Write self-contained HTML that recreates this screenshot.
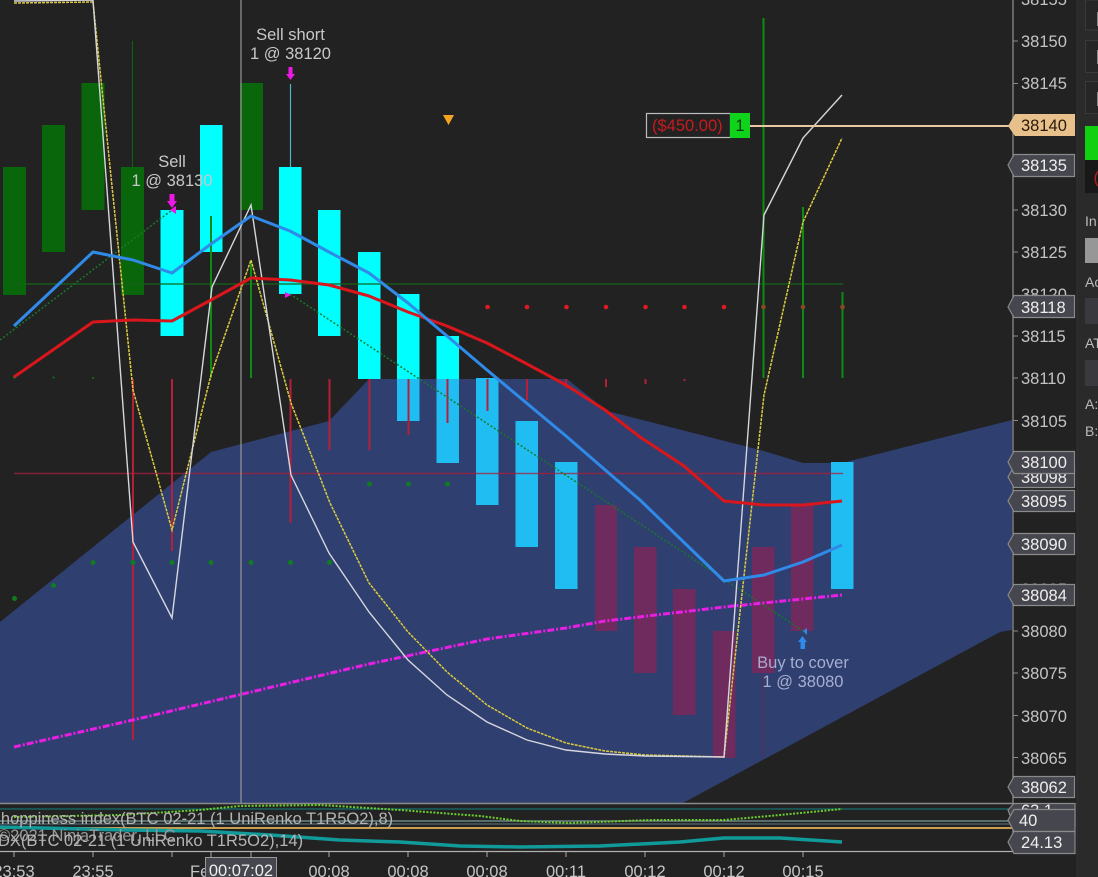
<!DOCTYPE html>
<html><head><meta charset="utf-8"><style>
html,body{margin:0;padding:0;background:#222;width:1098px;height:877px;overflow:hidden}
svg{display:block;filter:blur(.35px)}
text{font-family:"Liberation Sans",sans-serif;font-size:16.5px;fill:#c8c8c8}
.s{fill:#c4c4c4}
.l{fill:#eee;text-anchor:start}
.m{text-anchor:middle}
.g{fill:#0a660a}.c{fill:#00ffff}.b{fill:#20bdf2}.r{fill:#6f2a5e}
.box{fill:#46464e;stroke:#8a8a8a;stroke-width:1.2}
</style></head><body>
<svg width="1098" height="877" viewBox="0 0 1098 877" xmlns="http://www.w3.org/2000/svg">
<rect width="1098" height="877" fill="#222222"/>
<rect x="1077" y="0" width="21" height="877" fill="#2a2a2a"/>
<line x1="1077" y1="0" x2="1077" y2="877" stroke="#333"/>

<!-- cloud -->
<polygon fill="#2f3f6f" points="0,622 211,452 329,421 369,379 567,379 607,411 764,451 803,463 842,463 1012,420 1012,630 1000,632 683,803 0,803"/>

<!-- thin green wick -->
<line x1="132.500" y1="41" x2="132.500" y2="167" stroke="#0a660a"/>
<!-- green bars -->
<rect class="g" x="3" y="167" width="23" height="128"/>
<rect class="g" x="42" y="125" width="23" height="127"/>
<rect class="g" x="81.500" y="83" width="23" height="127"/>
<rect class="g" x="121" y="167" width="23" height="128"/>
<rect class="g" x="240" y="83" width="23" height="127"/>
<!-- cyan bars -->
<rect class="c" x="160.500" y="210" width="23" height="126"/>
<rect class="c" x="200" y="125" width="22.500" height="127"/>
<rect class="c" x="279" y="167" width="22.500" height="127"/>
<rect class="c" x="318" y="210" width="22.500" height="126"/>
<rect class="c" x="358" y="252" width="22.500" height="127"/>
<rect class="c" x="397" y="294" width="22.500" height="85"/>
<rect class="c" x="436.500" y="336" width="22.500" height="43"/>
<rect class="b" x="397" y="379" width="22.500" height="42"/>
<rect class="b" x="436.500" y="379" width="22.500" height="84"/>
<rect class="b" x="476" y="378" width="22.500" height="127"/>
<rect class="b" x="515.500" y="421" width="22.500" height="126"/>
<rect class="b" x="555" y="462" width="22.500" height="127"/>
<rect class="b" x="831" y="462" width="22.500" height="127"/>
<!-- maroon bars -->
<rect class="r" x="595" y="505" width="22" height="126"/>
<rect class="r" x="634" y="547" width="22.500" height="126"/>
<rect class="r" x="673" y="589" width="22.500" height="126"/>
<rect class="r" x="713" y="631" width="22.500" height="127"/>
<rect class="r" x="752" y="547" width="22.500" height="126"/>
<rect class="r" x="791" y="505" width="22.500" height="126"/>
<line x1="763.500" y1="673" x2="763.500" y2="757" stroke="#56305f" stroke-width="1.500"/>
<!-- sell short wick -->
<line x1="290.500" y1="84" x2="290.500" y2="167" stroke="#4fb4c4" stroke-width="1.200"/>

<!-- horizontal lines -->
<line x1="14" y1="284" x2="843" y2="284" stroke="#14641a" stroke-width="1.300"/>
<line x1="14" y1="473.500" x2="843" y2="473.500" stroke="#a82040" stroke-width="1.500" opacity=".75"/>

<!-- red wicks -->
<g stroke="#b61f3a" stroke-width="2">
<line x1="133" y1="379" x2="133" y2="740"/>
<line x1="172" y1="379" x2="172" y2="551"/>
<line x1="290.500" y1="379" x2="290.500" y2="523"/>
<line x1="329.500" y1="379" x2="329.500" y2="450"/>
<line x1="369.500" y1="379" x2="369.500" y2="450"/>
<line x1="408.500" y1="379" x2="408.500" y2="435"/>
<line x1="447.500" y1="379" x2="447.500" y2="423"/>
<line x1="487.500" y1="379" x2="487.500" y2="411"/>
<line x1="527" y1="379" x2="527" y2="400"/>
<line x1="566" y1="379" x2="566" y2="388"/>
<line x1="606" y1="379" x2="606" y2="387"/>
<line x1="645.500" y1="379" x2="645.500" y2="384"/>
<line x1="684.500" y1="379" x2="684.500" y2="381"/>
</g>
<!-- green wicks -->
<g stroke="#0f8a12" stroke-width="2">
<line x1="211" y1="216" x2="211" y2="378"/>
<line x1="251" y1="262" x2="251" y2="378"/>
<line x1="763.500" y1="18" x2="763.500" y2="378"/>
<line x1="803" y1="207" x2="803" y2="378"/>
<line x1="842.500" y1="292" x2="842.500" y2="378"/>
</g>

<!-- dots -->
<g fill="#e01a24">
<circle cx="487.500" cy="307" r="2.300"/><circle cx="527" cy="307" r="2.300"/><circle cx="566.500" cy="307" r="2.300"/><circle cx="606" cy="307" r="2.300"/><circle cx="645.500" cy="307" r="2.300"/><circle cx="684.500" cy="307" r="2.300"/><circle cx="724" cy="307" r="2.300"/>
</g>
<g fill="#8a4a20"><circle cx="763.500" cy="307" r="2.300"/><circle cx="803" cy="307" r="2.300"/><circle cx="842.500" cy="307" r="2.300"/></g>
<g fill="#0f7c22">
<circle cx="14.500" cy="598.500" r="2.500"/><circle cx="53.500" cy="585.500" r="2.500"/><circle cx="93" cy="562.500" r="2.500"/><circle cx="133" cy="562.500" r="2.500"/><circle cx="172" cy="562.500" r="2.500"/><circle cx="211" cy="562.500" r="2.500"/><circle cx="251" cy="562.500" r="2.500"/><circle cx="290.500" cy="562.500" r="2.500"/><circle cx="329.500" cy="562.500" r="2.500"/>
<circle cx="369.500" cy="484" r="2.500"/><circle cx="408.500" cy="484" r="2.500"/><circle cx="447.500" cy="484" r="2.500"/>
<circle cx="14.500" cy="377" r="1.500"/><circle cx="53.500" cy="377.500" r="1"/><circle cx="93" cy="378" r="1"/>
</g>

<!-- crosshair -->
<line x1="241" y1="0" x2="241" y2="851" stroke="#9a9a9a" stroke-width="1.300" opacity=".9"/>

<!-- dotted trade lines -->
<polyline fill="none" stroke="#157a2a" stroke-width="1.500" stroke-dasharray="2 2" points="0,340 172,210"/>
<polyline fill="none" stroke="#157a2a" stroke-width="1.500" stroke-dasharray="2 2" points="290,294 803,631"/>

<!-- magenta -->
<polyline fill="none" stroke="#e81ee4" stroke-width="3" stroke-dasharray="7 2 2 2" points="14,747 133,720 251,692 369,664 487,639 566,628 605,621 724,607 842,595"/>
<!-- yellow -->
<polyline fill="none" stroke="#dccb40" stroke-width="1.500" stroke-dasharray="3 1" points="14,3 93,2 133,390 172,530 211,375 251,260 291,403 330,503 369,583 408,632 447,672 487,705 527,728 566,743 605,751 645,755 724,757 764,395 803,222 842,138"/>
<!-- white -->
<polyline fill="none" stroke="#d6d6de" stroke-width="1.400" points="14,1 93,0 133,542 172,618 212,287 251,205 291,475 329,553 369,612 408,660 447,695 487,722 527,740 566,750 605,754 645,756 724,757 764,215 803,138 842,95"/>
<!-- red line -->
<polyline fill="none" stroke="#d9161c" stroke-width="3" stroke-linejoin="round" points="14,377 93,322 133,320 172,321 211,300 251,278 290,280 329,285 369,296 408,312 447,326 487,343 527,364 566,385 605,410 640,437 684,466 724,501 764,505 803,505 842,501"/>
<!-- blue line -->
<polyline fill="none" stroke="#2f8ae8" stroke-width="3" stroke-linejoin="round" points="14,326 93,252 133,260 172,273 211,244 251,216 290,231 329,252 369,273 408,303 447,336 487,370 566,436 640,500 724,581 764,575 803,562 842,545"/>

<!-- tan line + position -->
<line x1="750" y1="126" x2="1012" y2="126" stroke="#e8c8a0" stroke-width="2"/>
<rect x="646.500" y="113.500" width="84" height="24" fill="#222" stroke="#bdbdbd" stroke-width="1.200"/>
<rect x="730" y="113" width="20" height="25" fill="#10d41c"/>
<text x="652" y="131" style="fill:#c81a20">($450.00)</text>
<text x="740" y="131" class="m" style="fill:#0b3a0b">1</text>

<!-- orange triangle -->
<polygon points="443,115 454,115 448.500,125" fill="#f5a420"/>

<!-- arrows -->
<g fill="#ee18e6">
<polygon points="169.500,194 174.500,194 174.500,201 177,201 172,208 167,201 169.500,201"/>
<polygon points="288.500,67 292.500,67 292.500,74 295,74 290.500,80 286,74 288.500,74"/>
<polygon points="170,210 176,206 176,214"/>
<polygon points="285,292 285,298 291,295"/>
</g>
<g fill="#2f8ae8">
<polygon points="800.500,649 805,649 805,642 807,642 802.500,636 798,642 800.500,642"/>
<polygon points="803,631 807,628 807,635"/>
</g>

<!-- trade labels -->
<text x="172" y="167" class="m">Sell</text>
<text x="172" y="186" class="m">1 @ 38130</text>
<text x="290.500" y="40" class="m">Sell short</text>
<text x="290.500" y="59" class="m">1 @ 38120</text>
<text x="803" y="668" class="m" style="fill:#a6aed0">Buy to cover</text>
<text x="803" y="687" class="m" style="fill:#a6aed0">1 @ 38080</text>

<!-- lower panel -->
<rect x="0" y="803" width="1013" height="48" fill="#222"/>
<line x1="0" y1="803.500" x2="1013" y2="803.500" stroke="#8a8a8a" stroke-width="1.500"/>
<line x1="0" y1="809" x2="1013" y2="809" stroke="#17706e" stroke-width="1.200"/>
<line x1="0" y1="821" x2="1013" y2="821" stroke="#7a9a98" stroke-width="1.300"/>
<line x1="0" y1="824" x2="1013" y2="824" stroke="#4f6a70" stroke-width="1.300"/>
<line x1="0" y1="828" x2="1013" y2="828" stroke="#c8a050" stroke-width="2"/>
<polyline fill="none" stroke="#109a9a" stroke-width="3.500" points="0,827 125,830 200,831 270,835 340,840 400,842 460,846 520,847 600,846 680,842 724,838 780,838 842,842"/>
<polyline fill="none" stroke="#6ccc2c" stroke-width="2" stroke-dasharray="2 1.500" points="14,817 120,815 200,810 240,806 320,805 400,810 480,816 520,821 570,823 650,820 724,820 780,815 842,809"/>
<text x="-11" y="824" style="fill:#b4b4b4">Choppiness index(BTC 02-21 (1 UniRenko T1R5O2),8)</text>
<text x="-2" y="841" style="fill:#9a9a9a">©2021 NinjaTrader, LLC</text>
<text x="-13" y="846" style="fill:#b4b4b4">ADX(BTC 02-21 (1 UniRenko T1R5O2),14)</text>
<line x1="0" y1="851.500" x2="1013" y2="851.500" stroke="#b0b0b0" stroke-width="1.300"/>

<!-- x ticks -->
<g stroke="#aaa" stroke-width="1">
<line x1="14" y1="852" x2="14" y2="857"/><line x1="93" y1="852" x2="93" y2="857"/><line x1="172" y1="852" x2="172" y2="857"/><line x1="211" y1="852" x2="211" y2="857"/><line x1="251" y1="852" x2="251" y2="857"/><line x1="329" y1="852" x2="329" y2="857"/><line x1="408" y1="852" x2="408" y2="857"/><line x1="487" y1="852" x2="487" y2="857"/><line x1="566" y1="852" x2="566" y2="857"/><line x1="645" y1="852" x2="645" y2="857"/><line x1="724" y1="852" x2="724" y2="857"/><line x1="803" y1="852" x2="803" y2="857"/>
</g>
<g class="s">
<text x="14" y="877" class="m s">23:53</text>
<text x="93" y="877" class="m s">23:55</text>
<text x="190" y="877" class="s">Feb</text>
<text x="329" y="877" class="m s">00:08</text>
<text x="408" y="877" class="m s">00:08</text>
<text x="487" y="877" class="m s">00:08</text>
<text x="566" y="877" class="m s">00:11</text>
<text x="645" y="877" class="m s">00:12</text>
<text x="724" y="877" class="m s">00:12</text>
<text x="803" y="877" class="m s">00:15</text>
</g>
<rect x="205.500" y="857.500" width="71" height="24" fill="#46464e" stroke="#9a9a9a"/>
<text x="241" y="876" class="m" style="fill:#eee">00:07:02</text>

<!-- price axis -->
<line x1="1013" y1="0" x2="1013" y2="851" stroke="#8a8a8a" stroke-width="1.300"/>
<g stroke="#8a8a8a">
<line x1="1013" y1="41" x2="1018" y2="41"/><line x1="1013" y1="83.500" x2="1018" y2="83.500"/><line x1="1013" y1="210" x2="1018" y2="210"/><line x1="1013" y1="252" x2="1018" y2="252"/><line x1="1013" y1="336" x2="1018" y2="336"/><line x1="1013" y1="378" x2="1018" y2="378"/><line x1="1013" y1="420.500" x2="1018" y2="420.500"/><line x1="1013" y1="631" x2="1018" y2="631"/><line x1="1013" y1="673" x2="1018" y2="673"/><line x1="1013" y1="715.500" x2="1018" y2="715.500"/><line x1="1013" y1="757.500" x2="1018" y2="757.500"/>
</g>
<text x="1021" y="5" class="s">38155</text>
<text x="1021" y="47" class="s">38150</text>
<text x="1021" y="89" class="s">38145</text>
<text x="1021" y="216" class="s">38130</text>
<text x="1021" y="258" class="s">38125</text>
<text x="1021" y="300" class="s">38120</text>
<text x="1021" y="342" class="s">38115</text>
<text x="1021" y="384" class="s">38110</text>
<text x="1021" y="427" class="s">38105</text>
<text x="1021" y="595" class="s">38085</text>
<text x="1021" y="637" class="s">38080</text>
<text x="1021" y="679" class="s">38075</text>
<text x="1021" y="722" class="s">38070</text>
<text x="1021" y="764" class="s">38065</text>

<!-- price labels -->
<polygon points="1008,126 1015,114 1075,114 1075,136 1015,136 1008,126" fill="#e8c08c"/>
<text x="1021" y="131" style="fill:#2a1a08">38140</text>
<polygon class="box" points="1008,165 1014,154.500 1074.500,154.500 1074.500,176.500 1014,176.500"/>
<text x="1021" y="171" class="l">38135</text>
<polygon class="box" points="1008,307 1014,295.500 1074.500,295.500 1074.500,317.500 1014,317.500"/>
<text x="1021" y="313" class="l">38118</text>
<polygon class="box" points="1008,477 1014,466.500 1074.500,466.500 1074.500,487.500 1014,487.500"/>
<text x="1021" y="483" class="l">38098</text>
<polygon class="box" points="1008,462 1014,451.500 1074.500,451.500 1074.500,473.500 1014,473.500"/>
<text x="1021" y="468" class="l">38100</text>
<polygon class="box" points="1008,501 1014,490.500 1074.500,490.500 1074.500,511.500 1014,511.500"/>
<text x="1021" y="507" class="l">38095</text>
<polygon class="box" points="1008,544 1014,533.500 1074.500,533.500 1074.500,554.500 1014,554.500"/>
<text x="1021" y="550" class="l">38090</text>
<polygon class="box" points="1008,595 1014,584.500 1074.500,584.500 1074.500,605.500 1014,605.500"/>
<text x="1021" y="601" class="l">38084</text>
<polygon class="box" points="1008,787 1014,776.500 1074.500,776.500 1074.500,797.500 1014,797.500"/>
<text x="1021" y="793" class="l">38062</text>
<polygon class="box" points="1008,810 1014,803.500 1075,803.500 1075,826 1014,826"/>
<text x="1021" y="816" class="l">63.1</text>
<polygon class="box" points="1008,820 1014,809.500 1075,809.500 1075,831.500 1014,831.500"/>
<text x="1019" y="826" class="l">40</text>
<polygon class="box" points="1008,842 1014,831.500 1075,831.500 1075,853.500 1014,853.500"/>
<text x="1021" y="848" class="l">24.13</text>

<!-- right side panel -->
<rect x="1085.500" y="0" width="14" height="30" fill="#262626" stroke="#3a3a3a"/>
<rect x="1085.500" y="40.500" width="14" height="32" fill="#262626" stroke="#3a3a3a"/>
<rect x="1085.500" y="81.500" width="14" height="32" fill="#262626" stroke="#3a3a3a"/>
<rect x="1097" y="12" width="2" height="14" fill="#888"/><rect x="1097" y="50" width="2" height="14" fill="#888"/><rect x="1097" y="92" width="2" height="14" fill="#888"/>
<rect x="1085" y="126" width="13" height="34" fill="#10d010"/>
<rect x="1085" y="160" width="13" height="33" fill="#181818"/>
<text x="1093.500" y="183" style="fill:#b81c20">(</text>
<text x="1085" y="226" style="font-size:14px;fill:#bbb">In</text>
<rect x="1085" y="238" width="13" height="25" fill="#979797"/>
<text x="1085" y="287" style="font-size:14px;fill:#bbb">Ac</text>
<rect x="1085" y="298" width="13" height="26" fill="#3a3a3e"/>
<text x="1085" y="348" style="font-size:14px;fill:#bbb">AT</text>
<rect x="1085" y="360" width="13" height="26" fill="#3a3a3e"/>
<text x="1085" y="409" style="font-size:14px;fill:#bbb">A:</text>
<text x="1085" y="436" style="font-size:14px;fill:#bbb">B:</text>
</svg>
</body></html>
